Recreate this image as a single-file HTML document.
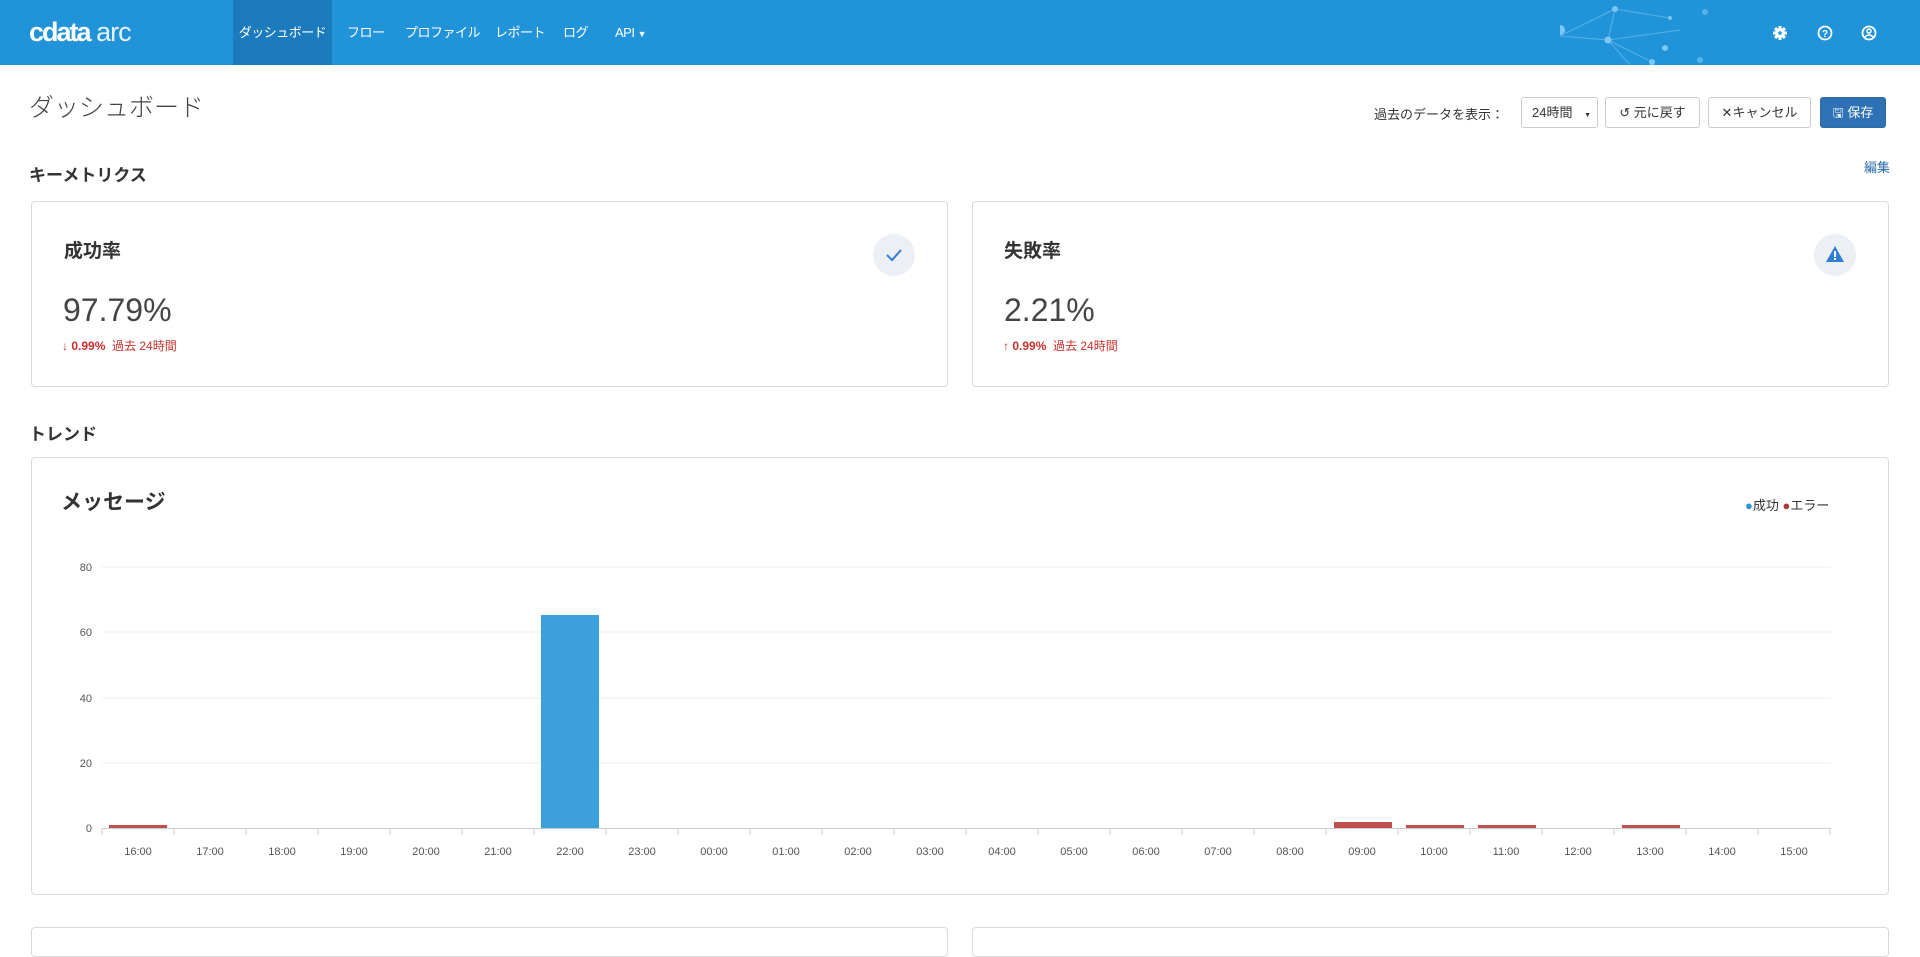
<!DOCTYPE html>
<html><head><meta charset="utf-8"><style>
*{box-sizing:border-box;margin:0;padding:0}
body{width:1920px;height:937px;overflow:hidden;background:#fff;font-family:"Liberation Sans","Noto Sans CJK JP",sans-serif;color:#333;position:relative}
.a{position:absolute;white-space:nowrap}
.hdr{position:absolute;left:0;top:0;width:1920px;height:65px;background:#2193d8}
.nav{position:absolute;top:0;height:65px;line-height:65px;color:#fff;font-size:13px;letter-spacing:-0.5px}
.card{position:absolute;border:1px solid #d9d9d9;border-radius:4px;background:#fff}
.btn{position:absolute;top:97px;height:31px;border:1px solid #ccc;border-radius:3px;background:#fff;font-size:13px;line-height:29px;text-align:center;color:#333}
.red{color:#c9302c}
</style></head><body>
<div class="hdr">
<svg class="a" style="left:1560px;top:0" width="300" height="65">
<g stroke="#6cc0f0" stroke-width="1" opacity=".7"><line x1="0" y1="36" x2="55" y2="9"/><line x1="55" y1="9" x2="48" y2="40"/><line x1="0" y1="36" x2="48" y2="40"/><line x1="55" y1="9" x2="110" y2="18"/><line x1="48" y1="40" x2="92" y2="62"/><line x1="48" y1="40" x2="120" y2="30"/><line x1="48" y1="40" x2="70" y2="65"/></g>
<g fill="#7cc8f2"><circle cx="0" cy="30" r="5"/><circle cx="55" cy="9" r="3"/><circle cx="48" cy="40" r="3.5"/><circle cx="110" cy="18" r="2"/><circle cx="92" cy="62" r="3"/><circle cx="105" cy="48" r="3"/><circle cx="145" cy="12" r="3" opacity=".6"/><circle cx="140" cy="60" r="3" opacity=".6"/></g></svg>
</div>
<div class="a" style="left:29px;top:17px;color:#fff;font-size:27px;letter-spacing:-1px"><b style="font-weight:900;letter-spacing:-2px">cdata</b> <span style="font-weight:300;color:#e6f3fb">arc</span></div>
<div class="nav" style="left:233px;width:99px;background:#1b7bbd;text-align:center">ダッシュボード</div>
<div class="nav" style="left:347px">フロー</div>
<div class="nav" style="left:405px">プロファイル</div>
<div class="nav" style="left:495px">レポート</div>
<div class="nav" style="left:563px">ログ</div>
<div class="nav" style="left:615px">API <span style="font-size:9px">▼</span></div>
<svg class="a" style="left:1772px;top:24px" width="110" height="18" fill="none" stroke="#fff" stroke-width="2">
<g fill="#fff" stroke="none"><circle cx="8" cy="9" r="5"/><rect x="6.5" y="2" width="3" height="14"/><rect x="1" y="7.5" width="14" height="3"/><rect x="6.5" y="2" width="3" height="14" transform="rotate(45 8 9)"/><rect x="6.5" y="2" width="3" height="14" transform="rotate(-45 8 9)"/></g><circle cx="8" cy="9" r="1.8" fill="#2193d8" stroke="none"/>
<circle cx="53" cy="9" r="6.5" stroke-width="1.8"/><text x="53" y="13" font-size="10" fill="#fff" stroke="none" text-anchor="middle" font-weight="bold">?</text>
<circle cx="97" cy="9" r="6.5" stroke-width="1.8"/><circle cx="97" cy="7" r="2" stroke-width="1.5"/><path d="M93 13q4-4 8 0" stroke-width="1.5"/></svg>

<div class="a" style="left:29px;top:88px;font-size:25px;color:#444;font-weight:300">ダッシュボード</div>
<div class="a" style="left:1374px;top:104px;font-size:13px">過去のデータを表示：</div>
<div class="btn" style="left:1521px;width:77px;text-align:left;padding-left:10px">24時間 <span style="font-size:7px;margin-left:8px">▼</span></div>
<div class="btn" style="left:1605px;width:95px">↺ 元に戻す</div>
<div class="btn" style="left:1708px;width:103px">✕キャンセル</div>
<div class="btn" style="left:1820px;width:66px;background:#2e72b5;border-color:#2e6da4;color:#fff">🖫 保存</div>
<div class="a" style="left:29px;top:161px;font-size:17px;font-weight:bold">キーメトリクス</div>
<div class="a" style="left:1864px;top:157px;font-size:13px;color:#2f6fa8">編集</div>

<div class="card" style="left:31px;top:201px;width:917px;height:186px"></div>
<div class="a" style="left:64px;top:236px;font-size:19px;font-weight:bold">成功率</div>
<div class="a" style="left:873px;top:234px;width:42px;height:42px;border-radius:50%;background:#eceff3"></div>
<svg class="a" style="left:884px;top:245px" width="20" height="20"><path d="M3 10l5 5 9-10" stroke="#2f7fd6" stroke-width="2" fill="none"/></svg>
<div class="a" style="left:63px;top:292px;font-size:32px;color:#444">97.79%</div>
<div class="a red" style="left:62px;top:337px;font-size:12px">↓ <b>0.99%</b>&nbsp; 過去 24時間</div>

<div class="card" style="left:972px;top:201px;width:917px;height:186px"></div>
<div class="a" style="left:1004px;top:236px;font-size:19px;font-weight:bold">失敗率</div>
<div class="a" style="left:1814px;top:234px;width:42px;height:42px;border-radius:50%;background:#eceff3"></div>
<svg class="a" style="left:1825px;top:244px" width="20" height="20"><path d="M10 2L19 18H1Z" fill="#2f7fd6"/><rect x="9" y="7" width="2" height="6" fill="#fff"/><rect x="9" y="14" width="2" height="2" fill="#fff"/></svg>
<div class="a" style="left:1004px;top:292px;font-size:32px;color:#444">2.21%</div>
<div class="a red" style="left:1003px;top:337px;font-size:12px">↑ <b>0.99%</b>&nbsp; 過去 24時間</div>

<div class="a" style="left:29px;top:420px;font-size:17px;font-weight:bold">トレンド</div>
<div class="card" style="left:31px;top:457px;width:1858px;height:438px"></div>
<div class="a" style="left:61px;top:486px;font-size:21px;font-weight:bold">メッセージ</div>
<div class="a" style="left:1745px;top:495px;font-size:13px"><span style="color:#2b93d0">●</span>成功 <span style="color:#b03a3a">●</span>エラー</div>

<svg class="a" style="left:0;top:0" width="1920" height="937" font-family="Liberation Sans" font-size="11" fill="#555">
<g stroke="#eee"><line x1="102" y1="567" x2="1831" y2="567"/><line x1="102" y1="632" x2="1831" y2="632"/><line x1="102" y1="698" x2="1831" y2="698"/><line x1="102" y1="763" x2="1831" y2="763"/></g>
<line x1="102" y1="828.5" x2="1831" y2="828.5" stroke="#ccc"/>
<g text-anchor="end"><text x="92" y="571">80</text><text x="92" y="636">60</text><text x="92" y="702">40</text><text x="92" y="767">20</text><text x="92" y="832">0</text></g>
<rect x="541" y="615" width="58" height="213" fill="#3ba0db"/>
<g fill="#c0504d"><rect x="109" y="825" width="58" height="3"/><rect x="1334" y="822" width="58" height="6"/><rect x="1406" y="825" width="58" height="3"/><rect x="1478" y="825" width="58" height="3"/><rect x="1622" y="825" width="58" height="3"/></g>
<g stroke="#ccc"><line x1="102" y1="829" x2="102" y2="835"/><line x1="174" y1="829" x2="174" y2="835"/><line x1="246" y1="829" x2="246" y2="835"/><line x1="318" y1="829" x2="318" y2="835"/><line x1="390" y1="829" x2="390" y2="835"/><line x1="462" y1="829" x2="462" y2="835"/><line x1="534" y1="829" x2="534" y2="835"/><line x1="606" y1="829" x2="606" y2="835"/><line x1="678" y1="829" x2="678" y2="835"/><line x1="750" y1="829" x2="750" y2="835"/><line x1="822" y1="829" x2="822" y2="835"/><line x1="894" y1="829" x2="894" y2="835"/><line x1="966" y1="829" x2="966" y2="835"/><line x1="1038" y1="829" x2="1038" y2="835"/><line x1="1110" y1="829" x2="1110" y2="835"/><line x1="1182" y1="829" x2="1182" y2="835"/><line x1="1254" y1="829" x2="1254" y2="835"/><line x1="1326" y1="829" x2="1326" y2="835"/><line x1="1398" y1="829" x2="1398" y2="835"/><line x1="1470" y1="829" x2="1470" y2="835"/><line x1="1542" y1="829" x2="1542" y2="835"/><line x1="1614" y1="829" x2="1614" y2="835"/><line x1="1686" y1="829" x2="1686" y2="835"/><line x1="1758" y1="829" x2="1758" y2="835"/><line x1="1830" y1="829" x2="1830" y2="835"/></g>
<g text-anchor="middle"><text x="138" y="855">16:00</text><text x="210" y="855">17:00</text><text x="282" y="855">18:00</text><text x="354" y="855">19:00</text><text x="426" y="855">20:00</text><text x="498" y="855">21:00</text><text x="570" y="855">22:00</text><text x="642" y="855">23:00</text><text x="714" y="855">00:00</text><text x="786" y="855">01:00</text><text x="858" y="855">02:00</text><text x="930" y="855">03:00</text><text x="1002" y="855">04:00</text><text x="1074" y="855">05:00</text><text x="1146" y="855">06:00</text><text x="1218" y="855">07:00</text><text x="1290" y="855">08:00</text><text x="1362" y="855">09:00</text><text x="1434" y="855">10:00</text><text x="1506" y="855">11:00</text><text x="1578" y="855">12:00</text><text x="1650" y="855">13:00</text><text x="1722" y="855">14:00</text><text x="1794" y="855">15:00</text></g>
</svg>
<div class="card" style="left:31px;top:927px;width:917px;height:30px"></div>
<div class="card" style="left:972px;top:927px;width:917px;height:30px"></div>
</body></html>
